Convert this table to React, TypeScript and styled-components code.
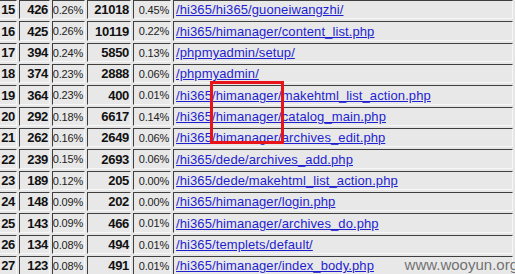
import React from "react";
import styled, { createGlobalStyle } from "styled-components";

const Global = createGlobalStyle`
  html, body { margin: 0; padding: 0; background: #e6e6e6; overflow: hidden; }
  body { width: 515px; height: 274px; position: relative; }
`;

const Page = styled.div`
  position: relative;
  width: 515px;
  height: 274px;
  overflow: hidden;
  background: #e6e6e6;
`;

const Table = styled.div`
  display: flex;
  flex-direction: column;
  row-gap: 2px;
  margin-left: -1px;
`;

const Row = styled.div<{ $tall?: boolean }>`
  display: grid;
  grid-template-columns: 18px 31px 33px 44px 38px 340px;
  column-gap: 2px;
  height: ${(p) => (p.$tall ? 20 : 19)}px;
`;

const Cell = styled.div<{ $align?: "left" | "right" }>`
  box-sizing: border-box;
  display: flex;
  align-items: center;
  justify-content: ${(p) => (p.$align === "left" ? "flex-start" : "flex-end")};
  padding-right: ${(p) => (p.$align === "left" ? "0" : "1px")};
  padding-left: ${(p) => (p.$align === "left" ? "2px" : "0")};
  background: #e8e8e8;
  border-top: 1px solid #3f3f3f;
  border-left: 1px solid #3f3f3f;
  border-right: 1px solid #f7f7f7;
  border-bottom: 1px solid #f7f7f7;
  overflow: hidden;
  white-space: nowrap;
`;

const Num = styled.span`
  font-family: "Liberation Sans", Arial, sans-serif;
  font-weight: bold;
  font-size: 13px;
  letter-spacing: -0.3px;
  color: #111;
`;

const Pct = styled.span`
  font-family: "Liberation Sans", Arial, sans-serif;
  font-size: 11px;
  letter-spacing: -0.2px;
  color: #222;
`;

const Link = styled.a`
  font-family: "Liberation Sans", Arial, sans-serif;
  font-size: 13px;
  letter-spacing: 0.1px;
  color: #1f1fd0;
  text-decoration: underline;
`;

const Mark = styled.div`
  position: absolute;
  left: 210px;
  top: 81px;
  width: 74px;
  height: 63px;
  box-sizing: border-box;
  border: 3px solid #e8141a;
  pointer-events: none;
`;

const Watermark = styled.div`
  position: absolute;
  right: -3px;
  bottom: 1px;
  font-family: "Liberation Sans", Arial, sans-serif;
  font-size: 15px;
  color: rgba(80, 80, 80, 0.8);
  pointer-events: none;
`;

const rows: [string, string, string, string, string, string][] = [
  ["15", "426", "0.26%", "21018", "0.45%", "/hi365/hi365/guoneiwangzhi/"],
  ["16", "425", "0.26%", "10119", "0.22%", "/hi365/himanager/content_list.php"],
  ["17", "394", "0.24%", "5850", "0.13%", "/phpmyadmin/setup/"],
  ["18", "374", "0.23%", "2888", "0.06%", "/phpmyadmin/"],
  ["19", "364", "0.23%", "400", "0.01%", "/hi365/himanager/makehtml_list_action.php"],
  ["20", "292", "0.18%", "6617", "0.14%", "/hi365/himanager/catalog_main.php"],
  ["21", "262", "0.16%", "2649", "0.06%", "/hi365/himanager/archives_edit.php"],
  ["22", "239", "0.15%", "2693", "0.06%", "/hi365/dede/archives_add.php"],
  ["23", "189", "0.12%", "205", "0.00%", "/hi365/dede/makehtml_list_action.php"],
  ["24", "148", "0.09%", "202", "0.00%", "/hi365/himanager/login.php"],
  ["25", "143", "0.09%", "466", "0.01%", "/hi365/himanager/archives_do.php"],
  ["26", "134", "0.08%", "494", "0.01%", "/hi365/templets/default/"],
  ["27", "123", "0.08%", "491", "0.01%", "/hi365/himanager/index_body.php"],
];

export default function App() {
  return (
    <Page>
      <Global />
      <Table>
        {rows.map((r, i) => (
          <Row key={r[0]} $tall={i % 3 === 1}>
            <Cell><Num>{r[0]}</Num></Cell>
            <Cell><Num>{r[1]}</Num></Cell>
            <Cell><Pct>{r[2]}</Pct></Cell>
            <Cell><Num>{r[3]}</Num></Cell>
            <Cell><Pct>{r[4]}</Pct></Cell>
            <Cell $align="left"><Link href="#">{r[5]}</Link></Cell>
          </Row>
        ))}
      </Table>
      <Mark />
      <Watermark>www.wooyun.org</Watermark>
    </Page>
  );
}
